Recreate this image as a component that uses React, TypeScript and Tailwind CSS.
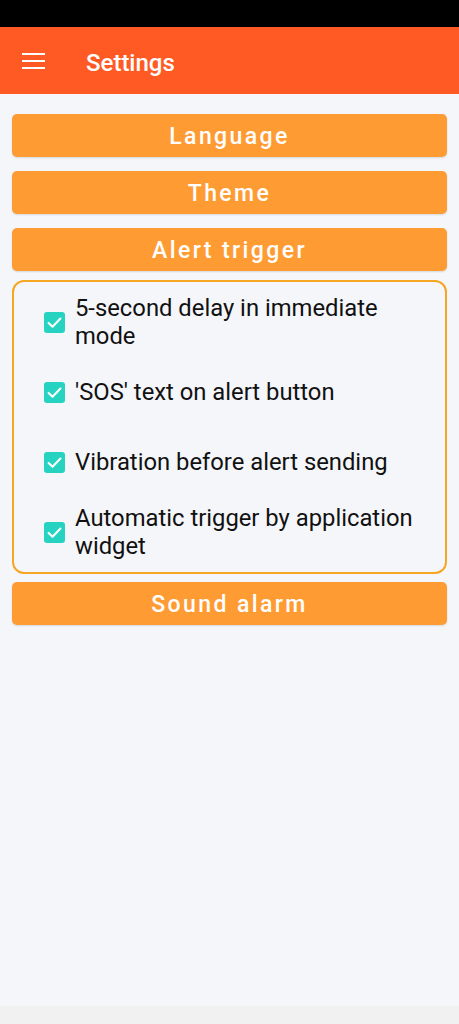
import React, { useState } from 'react';

const sections = ['Language', 'Theme', 'Alert trigger'];

const alertOptions = [
  { id: 'delay', label: '5-second delay in immediate mode' },
  { id: 'sos', label: "'SOS' text on alert button" },
  { id: 'vibration', label: 'Vibration before alert sending' },
  { id: 'widget', label: 'Automatic trigger by application widget' },
];

const SectionButton: React.FC<{ title: string }> = ({ title }) => (
  <button
    type="button"
    className="h-[43px] w-full rounded-[5px] bg-[#FF9B33] pt-[4px] text-[23px] font-medium tracking-[2.4px] text-white shadow-[0_1px_2px_rgba(0,0,0,0.12)]"
  >
    {title}
  </button>
);

const CheckRow: React.FC<{ label: string; checked: boolean; onToggle: () => void }> = ({
  label,
  checked,
  onToggle,
}) => (
  <label className="flex min-h-[56px] cursor-pointer items-center gap-[10px] pl-[30px] pr-4">
    <span
      onClick={onToggle}
      className={`flex h-[21px] w-[21px] shrink-0 items-center justify-center rounded-[3px] ${
        checked ? 'bg-[#26D3C1]' : 'border-2 border-gray-500'
      }`}
    >
      {checked && (
        <svg viewBox="0 0 24 24" className="h-[19px] w-[19px]" fill="none" stroke="white" strokeWidth={2.6}>
          <path d="M4.5 12.5l5 4.8L19.5 7" strokeLinecap="round" strokeLinejoin="round" />
        </svg>
      )}
    </span>
    <span className="text-[23.8px] leading-[28px] text-[#111]">{label}</span>
  </label>
);

export default function App() {
  const [checked, setChecked] = useState<Record<string, boolean>>({
    delay: true,
    sos: true,
    vibration: true,
    widget: true,
  });

  return (
    <div className="flex h-[1024px] w-[459px] flex-col bg-[#F5F6FA] font-['Roboto',sans-serif]">
      <div className="h-[27px] bg-black" />
      <header className="flex h-[67px] items-center bg-[#FF5A23] text-white">
        <div className="ml-[22px] flex w-[23px] flex-col gap-[5px]">
          <span className="h-[2px] bg-white" />
          <span className="h-[2px] bg-white" />
          <span className="h-[2px] bg-white" />
        </div>
        <h1 className="ml-[41px] pt-[4px] text-[24px] font-medium">Settings</h1>
      </header>

      <main className="flex flex-1 flex-col gap-[14px] px-[12px] pt-[20px]">
        {sections.map((s) => (
          <SectionButton key={s} title={s} />
        ))}
        <div className="-mt-[5px] -mb-[6px] flex flex-col gap-[14px] rounded-[12px] border-2 border-[#F5A623] py-[12px]">
          {alertOptions.map((o) => (
            <CheckRow
              key={o.id}
              label={o.label}
              checked={checked[o.id]}
              onToggle={() => setChecked((c) => ({ ...c, [o.id]: !c[o.id] }))}
            />
          ))}
        </div>
        <SectionButton title="Sound alarm" />
      </main>

      <div className="h-[18px] bg-[#F1F1F1]" />
    </div>
  );
}
